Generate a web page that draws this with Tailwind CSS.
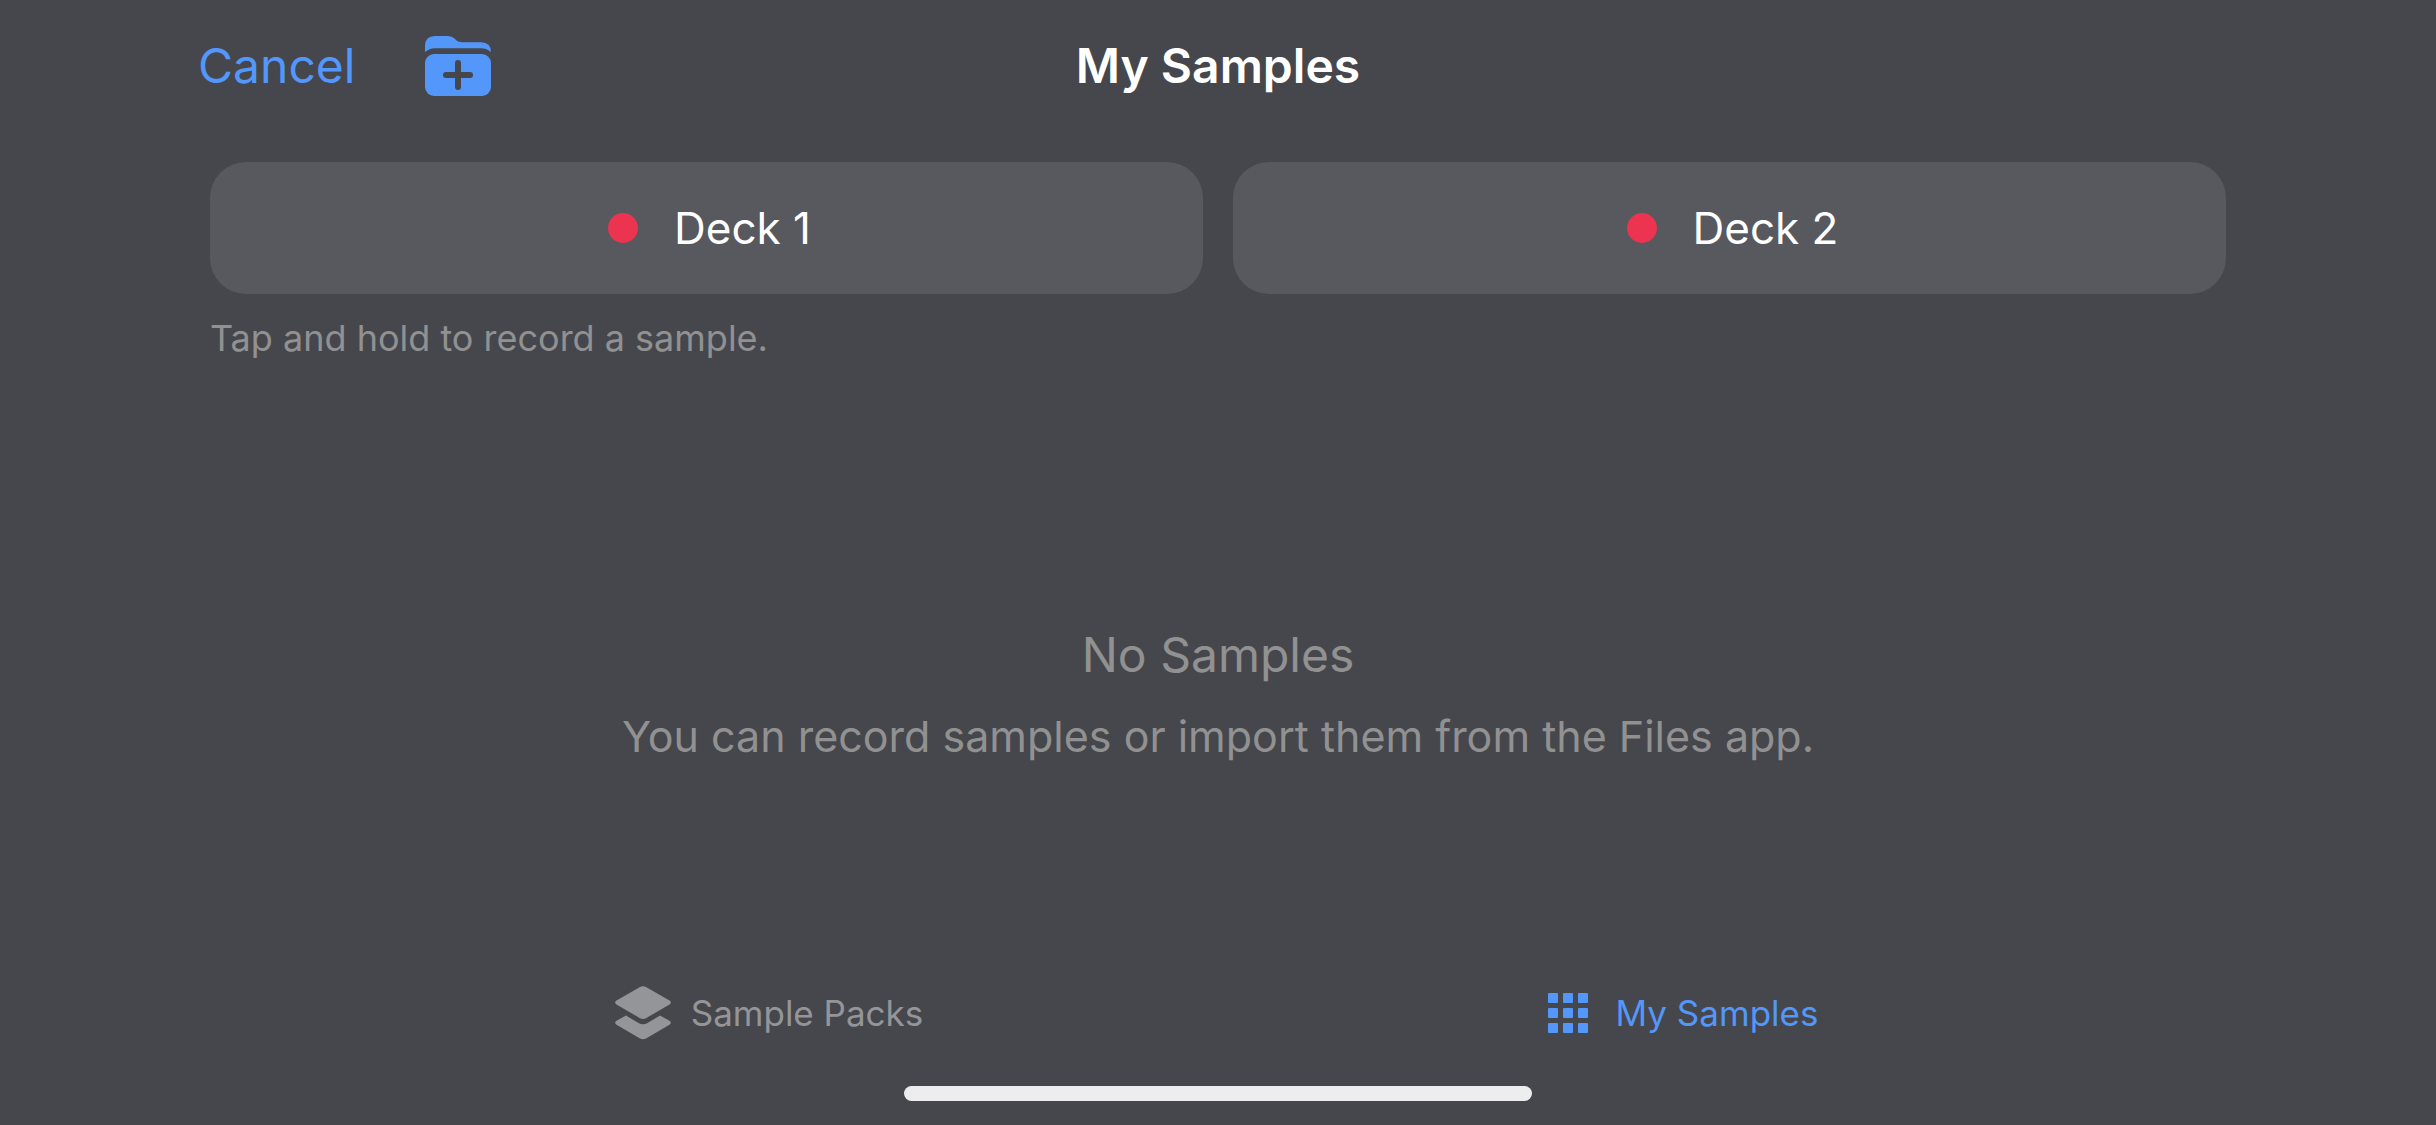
<!DOCTYPE html>
<html lang="en">
<head>
  <meta charset="UTF-8" />
  <meta name="viewport" content="width=device-width, initial-scale=1.0" />
  <title>My Samples</title>
  <script src="https://cdn.jsdelivr.net/npm/@tailwindcss/browser@4"></script>
</head>
<body class="bg-[#46474c] text-white font-['Inter',sans-serif] min-h-screen flex flex-col">

  <!-- Top bar -->
  <header class="grid grid-cols-[1fr_auto_1fr] items-center h-[132px] px-[198px]">
    <div class="flex items-center gap-[70px]">
      <button type="button" class="text-[48px] leading-[60px] text-[#5297f9]">Cancel</button>
      <button type="button" aria-label="New folder">
        <svg class="w-[66px] h-[60px]" viewBox="0 0 66 60" fill="none">
          <path d="M0 16V10Q0 0 10 0H23Q27 0 29.500 2.500L31.500 4.500Q33.500 6.200 37 6.200H56Q66 6.200 66 16.200Q62 12.200 56 12.200H10Q4 12.200 0 16Z" fill="#5297f9" />
          <rect y="18" width="66" height="42" rx="9" fill="#5297f9" />
          <path d="M33 27V51M21 39H45" stroke="#46474c" stroke-width="6" stroke-linecap="round" />
        </svg>
      </button>
    </div>
    <h1 class="text-[48px] leading-[60px] font-semibold">My Samples</h1>
  </header>

  <main class="flex-1 flex flex-col px-[210px] pt-[30px]">
    <!-- Record buttons -->
    <div class="grid grid-cols-2 gap-[30px]">
      <button type="button" class="flex items-center justify-center gap-[36px] h-[132px] pl-[6px] rounded-[36px] bg-[#58595e] text-[44px] leading-[54px]">
        <span class="size-[30px] rounded-full bg-[#ec3350]"></span>
        Deck 1
      </button>
      <button type="button" class="flex items-center justify-center gap-[36px] h-[132px] pl-[6px] rounded-[36px] bg-[#58595e] text-[44px] leading-[54px]">
        <span class="size-[30px] rounded-full bg-[#ec3350]"></span>
        Deck 2
      </button>
    </div>
    <p class="mt-[22px] text-[36px] leading-[44px] text-[#919192]">Tap and hold to record a sample.</p>

    <!-- Empty state -->
    <div class="flex-1 flex flex-col items-center justify-center gap-[24px] pt-[48px] text-[#919192]">
      <h2 class="text-[48px] leading-[60px]">No Samples</h2>
      <p class="text-[43px] leading-[54px]">You can record samples or import them from the Files app.</p>
    </div>
  </main>

  <!-- Tabs -->
  <nav class="grid grid-cols-2 pl-[312px] pr-[296px] h-[106px] text-[35px] leading-[44px]">
    <a href="#packs" class="flex items-center justify-center gap-[20px] h-[66px] text-[#949599]">
      <svg class="w-[56px] h-[54px]" viewBox="0 0 56 54" fill="currentColor">
        <path d="M25 1Q28 -.6 31 1L54.500 14.500Q57.200 16.500 54.500 18.500L31 32.200Q28 33.800 25 32.200L1.500 18.500Q-1.200 16.500 1.500 14.500Z" />
        <path d="M11 29.500L23.500 37Q28 39.400 32.500 37L45 29.500L54.500 34.800Q57.200 36.800 54.500 38.800L31 52.400Q28 54 25 52.400L1.500 38.800Q-1.200 36.800 1.500 34.800Z" />
      </svg>
      Sample Packs
    </a>
    <a href="#samples" aria-current="page" class="flex items-center justify-center gap-[28px] h-[66px] text-[#5297f9]">
      <svg class="size-[40px]" viewBox="0 0 40 40" fill="currentColor">
        <rect width="10" height="10" rx="1" />
        <rect x="15" width="10" height="10" rx="1" />
        <rect x="30" width="10" height="10" rx="1" />
        <rect y="15" width="10" height="10" rx="1" />
        <rect x="15" y="15" width="10" height="10" rx="1" />
        <rect x="30" y="15" width="10" height="10" rx="1" />
        <rect y="30" width="10" height="10" rx="1" />
        <rect x="15" y="30" width="10" height="10" rx="1" />
        <rect x="30" y="30" width="10" height="10" rx="1" />
      </svg>
      My Samples
    </a>
  </nav>

  <!-- Home indicator -->
  <div class="self-center w-[628px] h-[15px] mb-[24px] rounded-full bg-[#ededed]"></div>

</body>
</html>
